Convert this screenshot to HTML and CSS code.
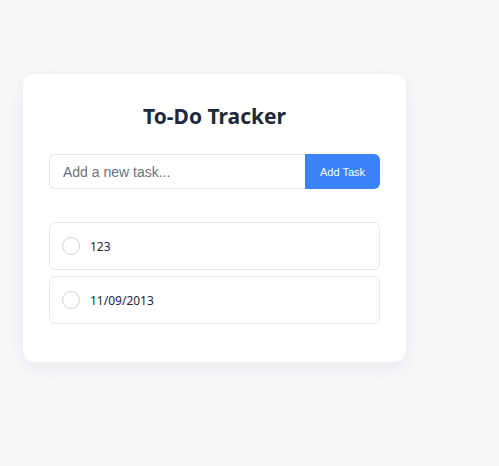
FILE: index.html
```html
<!DOCTYPE html>
<html lang="en">
<head>
<meta charset="utf-8">
<title>To-Do Tracker</title>
<link rel="stylesheet" href="styles.css">
</head>
<body>
<div class="card">
  <h1 class="title">To-Do Tracker</h1>
  <form class="add-form">
    <input class="task-input" type="text" placeholder="Add a new task...">
    <button class="add-btn" type="button">Add Task</button>
  </form>
  <ul class="task-list">
    <li class="task"><span class="check"></span><span class="task-text">123</span></li>
    <li class="task"><span class="check"></span><span class="task-text">11/09/2013</span></li>
  </ul>
</div>
</body>
</html>
```
FILE: styles.css
```css
* { box-sizing: border-box; }
html, body { margin: 0; padding: 0; }
body {
  background: #f7f8fa;
  font-family: "Noto Sans", "Open Sans", sans-serif;
  width: 499px;
  height: 466px;
  overflow: hidden;
}
.card {
  margin: 74px 0 0 23px;
  width: 383px;
  background: #ffffff;
  border-radius: 12px;
  padding: 26px 26px 38px;
  box-shadow: 0 6px 20px rgba(15, 23, 42, 0.07);
}
.title {
  margin: 0 0 22px;
  text-align: center;
  font-size: 21px;
  line-height: 32px;
  font-weight: 700;
  color: #1e293b;
}
.add-form {
  display: flex;
  height: 35px;
  margin: 0 0 33px;
}
.task-input {
  flex: 1;
  min-width: 0;
  border: 1px solid #e2e8f0;
  border-right: none;
  border-radius: 6px 0 0 6px;
  padding: 0 13px;
  font-family: "Liberation Sans", Arial, sans-serif;
  font-size: 14px;
  color: #1e293b;
  outline: none;
}
.task-input::placeholder { color: #6b7280; }
.add-btn {
  width: 75px;
  border: none;
  background: #3b82f6;
  color: #ffffff;
  border-radius: 0 6px 6px 0;
  font-family: "Liberation Sans", Arial, sans-serif;
  font-size: 11px;
  font-weight: 500;
  padding: 0;
}
.task-list {
  list-style: none;
  margin: 0;
  padding: 0;
  display: flex;
  flex-direction: column;
  gap: 6px;
}
.task {
  display: flex;
  align-items: center;
  height: 48px;
  border: 1px solid #e2e8f0;
  border-radius: 6px;
  padding: 0 12px;
}
.check {
  width: 18px;
  height: 18px;
  border: 1px solid #cbd5e1;
  border-radius: 50%;
  flex: none;
  margin-right: 10px;
}
.task-text {
  font-size: 12px;
  color: #1e293b;
}
```
